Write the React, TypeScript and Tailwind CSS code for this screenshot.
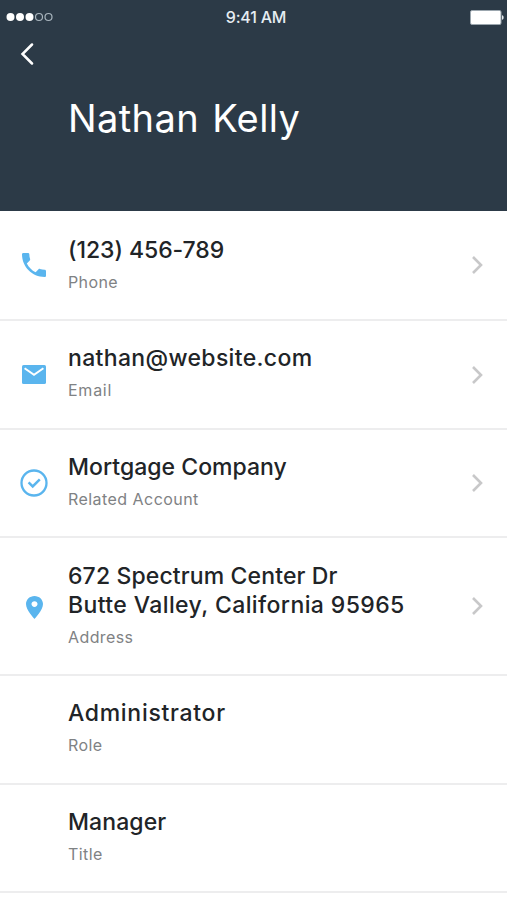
import type { ReactNode } from "react";

interface Field {
  lines: { text: string; tracking: string }[];
  label: string;
  labelTracking: string;
  spacing: string;
  icon?: ReactNode;
  linked?: boolean;
}

const PhoneIcon = () => (
  <svg className="size-8" viewBox="0 0 24 24" fill="currentColor">
    <path d="M6.62 10.79c1.44 2.83 3.76 5.14 6.59 6.59l2.2-2.2c.27-.27.67-.36 1.02-.24 1.12.37 2.33.57 3.57.57.55 0 1 .45 1 1V20c0 .55-.45 1-1 1-9.39 0-17-7.61-17-17 0-.55.45-1 1-1h3.5c.55 0 1 .45 1 1 0 1.25.2 2.45.57 3.57.11.35.03.74-.25 1.02l-2.2 2.2z" />
  </svg>
);

const MailIcon = () => (
  <svg className="h-[19px] w-6" viewBox="0 0 24 19">
    <rect width="24" height="19" rx="1.6" fill="currentColor" />
    <path d="M2.6 3.2 12 9.8l9.4-6.6" fill="none" stroke="#fff" strokeWidth="2" />
  </svg>
);

const CheckIcon = () => (
  <svg className="size-7" viewBox="0 0 28 28" fill="none" stroke="currentColor">
    <circle cx="14" cy="14" r="12.5" strokeWidth="2.3" />
    <path d="m8.6 13.4 4.1 4.1 7.1-7.1" strokeWidth="2.5" />
  </svg>
);

const PinIcon = () => (
  <svg className="mt-0.5 h-[23px] w-[17px]" viewBox="5 2 14 20" preserveAspectRatio="none" fill="currentColor">
    <path d="M12 2C8.13 2 5 5.13 5 9c0 5.25 7 13 7 13s7-7.75 7-13c0-3.87-3.13-7-7-7zm0 9.5c-1.38 0-2.5-1.12-2.5-2.5s1.12-2.5 2.5-2.5 2.5 1.12 2.5 2.5-1.12 2.5-2.5 2.5z" />
  </svg>
);

const fields: Field[] = [
  {
    lines: [{ text: "(123) 456-789", tracking: "tracking-[-0.05px]" }],
    label: "Phone",
    labelTracking: "tracking-[0.4px]",
    spacing: "h-[110px] pt-[25px]",
    icon: <PhoneIcon />,
    linked: true,
  },
  {
    lines: [{ text: "nathan@website.com", tracking: "tracking-[0.34px]" }],
    label: "Email",
    labelTracking: "tracking-[0.75px]",
    spacing: "h-[109px] pt-[23px]",
    icon: <MailIcon />,
    linked: true,
  },
  {
    lines: [{ text: "Mortgage Company", tracking: "tracking-[0.03px]" }],
    label: "Related Account",
    labelTracking: "tracking-[0.45px]",
    spacing: "h-[108px] pt-[23px]",
    icon: <CheckIcon />,
    linked: true,
  },
  {
    lines: [
      { text: "672 Spectrum Center Dr", tracking: "tracking-[0.13px]" },
      { text: "Butte Valley, California 95965", tracking: "tracking-[0.4px]" },
    ],
    label: "Address",
    labelTracking: "tracking-[0.4px]",
    spacing: "h-[138px] pt-6",
    icon: <PinIcon />,
    linked: true,
  },
  {
    lines: [{ text: "Administrator", tracking: "tracking-[0.7px]" }],
    label: "Role",
    labelTracking: "tracking-[0.4px]",
    spacing: "h-[109px] pt-[23px]",
  },
  {
    lines: [{ text: "Manager", tracking: "tracking-[0.1px]" }],
    label: "Title",
    labelTracking: "tracking-[0.4px]",
    spacing: "h-[108px] pt-[23px]",
  },
];

function StatusBar() {
  return (
    <div className="grid h-8 grid-cols-3 items-center pt-0.5 pr-[3px] pl-[6px]">
      <svg className="h-[10px] w-12" viewBox="0 0 48 10">
        <circle cx="4.5" cy="5" r="4" fill="#fff" />
        <circle cx="14" cy="5" r="4" fill="#fff" />
        <circle cx="23.5" cy="5" r="4" fill="#fff" />
        <circle cx="33" cy="5" r="3.5" fill="none" stroke="#a9b5be" strokeWidth="1.2" />
        <circle cx="42.5" cy="5" r="3.5" fill="none" stroke="#a9b5be" strokeWidth="1.2" />
      </svg>
      <span className="pl-0.5 text-center text-[16px] font-medium tracking-[-0.2px] whitespace-nowrap text-[#e6edf2]">
        9:41 AM
      </span>
      <svg className="h-[15px] w-[34px] justify-self-end" viewBox="0 0 34 15">
        <rect x="0.5" y="0.5" width="30.5" height="14" rx="1.5" fill="#fff" stroke="#9ba6ae" />
        <path d="M32 5.2c2.2.4 2.2 4.2 0 4.6z" fill="#e3e8ec" />
      </svg>
    </div>
  );
}

function FieldRow({ field }: { field: Field }) {
  return (
    <li className="flex border-b-2 border-[#ededee]">
      <div className="flex w-[68px] shrink-0 items-center justify-center text-[#5ab5ee]">
        {field.icon}
      </div>
      <div className={`-mb-0.5 flex-1 ${field.spacing}`}>
        {field.lines.map((line) => (
          <div
            key={line.text}
            className={`text-[23px] leading-[29px] font-[480] whitespace-nowrap text-[#212427] ${line.tracking}`}
          >
            {line.text}
          </div>
        ))}
        <div className={`mt-[7px] text-[16px] leading-5 text-[#7f8284] ${field.labelTracking}`}>
          {field.label}
        </div>
      </div>
      {field.linked && (
        <svg
          className="mr-6 h-5 w-3 shrink-0 self-center"
          viewBox="0 0 12 20"
          fill="none"
          stroke="#c8c8c9"
          strokeWidth="2.6"
        >
          <path d="m2 2 8 8-8 8" />
        </svg>
      )}
    </li>
  );
}

export default function App() {
  return (
    <div className="h-[900px] w-[507px] overflow-hidden bg-white font-['Inter',sans-serif]">
      <header className="h-[211px] bg-[#2c3a47] text-white">
        <StatusBar />
        <button className="mt-[11px] ml-5 block" aria-label="Back">
          <svg
            className="h-[22px] w-[14px]"
            viewBox="0 0 14 22"
            fill="none"
            stroke="#fff"
            strokeWidth="2.5"
            strokeLinecap="round"
          >
            <path d="M12 1.5 2.5 11l9.5 9.5" />
          </svg>
        </button>
        <h1 className="mt-[29px] ml-[68px] text-[38px] leading-[48px] font-normal tracking-[0.4px] [word-spacing:2px]">
          Nathan Kelly
        </h1>
      </header>
      <ul>
        {fields.map((field) => (
          <FieldRow key={field.label} field={field} />
        ))}
      </ul>
    </div>
  );
}
